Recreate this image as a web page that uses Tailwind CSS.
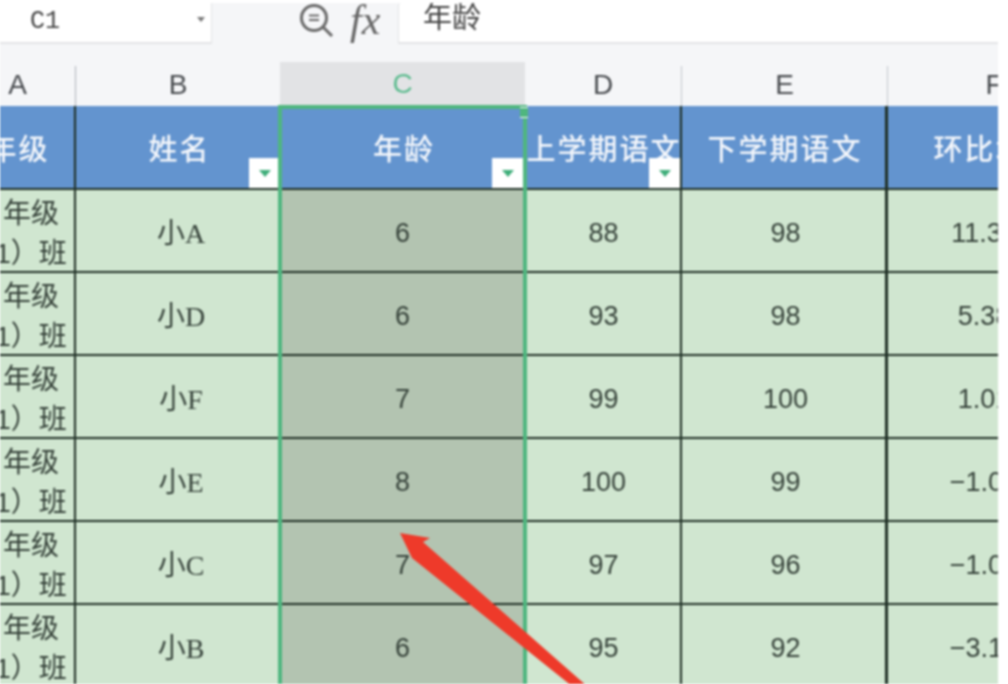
<!DOCTYPE html>
<html lang="zh">
<head>
<meta charset="utf-8">
<script src="https://cdn.jsdelivr.net/npm/@tailwindcss/browser@4"></script>
<title>表格</title>
</head>
<body class="bg-white">
<div class="w-[1008px] h-[684px] bg-white overflow-hidden pt-[3px] font-['Liberation_Sans','Noto_Sans_CJK_SC',sans-serif]">
  <div class="relative w-[998px] h-[681px] overflow-hidden bg-[#f5f6f8] blur-[0.8px]">
    <!-- formula bar -->
    <div class="flex h-[41px]">
      <div class="w-[212px] flex items-center justify-between bg-white border-r border-b-2 border-[#e3e4e6] pl-[30px] pr-[6px]">
        <span class="font-['Liberation_Mono',monospace] text-[25px] text-[#444] pb-[1px]">C1</span>
        <span class="w-0 h-0 border-x-[4px] border-x-transparent border-t-[5px] border-t-[#777] mb-[6px]"></span>
      </div>
      <div class="w-[186px] flex items-start pl-[86px]">
        <svg class="shrink-0" width="36" height="34" viewBox="0 0 36 34" fill="none" stroke="#6a6a6a" stroke-width="3"><circle cx="16" cy="15" r="12.5"/><path d="M25 24l9 9"/><path d="M11 12.500h10M11 17h10" stroke-width="2"/></svg>
      </div>
      <div class="flex-1 bg-white border-l border-b-2 border-[#e3e4e6] rounded-tl-[3px] pl-[24px] text-[29px] leading-[30px] text-[#444]">年龄</div>
    </div>
    <span class="absolute left-[350px] top-[-7px] font-['Liberation_Serif',serif] italic text-[42px] leading-[48px] text-[#666]">fx</span>

    <!-- column letters -->
    <div class="grid grid-cols-[116px_204px_245px_157px_206px_212px] w-[1140px] ml-[-40px] h-[62px] items-end text-[28px] leading-[44px] text-[#46494d] text-center">
      <div class="h-[40px] leading-[38px] border-r border-[#aeb2b8]">A</div>
      <div class="h-[40px] leading-[38px]">B</div>
      <div class="h-[44px] bg-[#e2e3e5] text-[#5cbb8e]">C</div>
      <div class="h-[40px] leading-[38px] border-r border-[#c3c6cb]">D</div>
      <div class="h-[40px] leading-[38px] border-r border-[#c3c6cb]">E</div>
      <div class="h-[40px] leading-[38px]">F</div>
    </div>

    <!-- table -->
    <div class="grid grid-cols-[116px_204px_245px_157px_206px_212px] grid-rows-[84px_83px_83px_83px_83px_83px_83px] w-[1140px] ml-[-40px] text-[27px] text-[#36423a] text-center [&>div]:border-b-2 [&>div]:border-[#1f2f25] [&>div]:flex [&>div]:items-center [&>div]:justify-center">
      <!-- header row -->
      <div class="bg-[#6394cf] border-r-2 text-[29px] tracking-[2px] text-[#f3f6fb] font-medium pt-[8px] pl-[3px]">年级</div>
      <div class="relative bg-[#6394cf] text-[29px] tracking-[2px] text-[#f3f6fb] font-medium pt-[8px] pl-[3px]">姓名
        <span class="absolute right-0 bottom-0 w-[31px] h-[30px] bg-white flex items-center justify-center"><span class="w-0 h-0 border-x-[6px] border-x-transparent border-t-[7px] border-t-[#3fae7a]"></span></span>
      </div>
      <div class="relative bg-[#6394cf] text-[29px] tracking-[2px] text-[#f3f6fb] font-medium pt-[8px] pl-[3px]">年龄
        <span class="absolute right-[2px] bottom-0 w-[31px] h-[30px] bg-white flex items-center justify-center"><span class="w-0 h-0 border-x-[6px] border-x-transparent border-t-[7px] border-t-[#3fae7a]"></span></span>
      </div>
      <div class="relative bg-[#6394cf] border-r-2 text-[29px] tracking-[2px] text-[#f3f6fb] font-medium pt-[8px] pl-[3px] whitespace-nowrap">上学期语文
        <span class="absolute right-0 bottom-0 w-[31px] h-[30px] bg-white flex items-center justify-center"><span class="w-0 h-0 border-x-[6px] border-x-transparent border-t-[7px] border-t-[#3fae7a]"></span></span>
      </div>
      <div class="bg-[#6394cf] border-r-[3px] text-[29px] tracking-[2px] text-[#f3f6fb] font-medium pt-[8px] pl-[3px] whitespace-nowrap">下学期语文</div>
      <div class="bg-[#6394cf] text-[29px] tracking-[2px] text-[#f3f6fb] font-medium pt-[8px] pl-[3px] whitespace-nowrap">环比增长</div>

      <!-- row 1 -->
      <div class="bg-[#d0e6d0] border-r-2 text-[28px] leading-[40px] pt-[6px]"><span><span class="invisible">一</span>年级<br>（1）班</span></div>
      <div class="bg-[#d0e6d0] pt-[6px] pl-[6px] font-['Liberation_Serif','Noto_Sans_CJK_SC',serif] text-[28px]">小A</div>
      <div class="bg-[#b3c4b1] pt-[6px]">6</div>
      <div class="bg-[#d0e6d0] border-r-2 pt-[6px] pl-[2px]">88</div>
      <div class="bg-[#d0e6d0] border-r-[3px] pt-[6px] pl-[4px]">98</div>
      <div class="bg-[#d0e6d0] pt-[6px] pl-[4px]">11.36%</div>
      <!-- row 2 -->
      <div class="bg-[#d0e6d0] border-r-2 text-[28px] leading-[40px] pt-[6px]"><span><span class="invisible">一</span>年级<br>（1）班</span></div>
      <div class="bg-[#d0e6d0] pt-[6px] pl-[6px] font-['Liberation_Serif','Noto_Sans_CJK_SC',serif] text-[28px]">小D</div>
      <div class="bg-[#b3c4b1] pt-[6px]">6</div>
      <div class="bg-[#d0e6d0] border-r-2 pt-[6px] pl-[2px]">93</div>
      <div class="bg-[#d0e6d0] border-r-[3px] pt-[6px] pl-[4px]">98</div>
      <div class="bg-[#d0e6d0] pt-[6px] pl-[4px]">5.38%</div>
      <!-- row 3 -->
      <div class="bg-[#d0e6d0] border-r-2 text-[28px] leading-[40px] pt-[6px]"><span><span class="invisible">一</span>年级<br>（1）班</span></div>
      <div class="bg-[#d0e6d0] pt-[6px] pl-[6px] font-['Liberation_Serif','Noto_Sans_CJK_SC',serif] text-[28px]">小F</div>
      <div class="bg-[#b3c4b1] pt-[6px]">7</div>
      <div class="bg-[#d0e6d0] border-r-2 pt-[6px] pl-[2px]">99</div>
      <div class="bg-[#d0e6d0] border-r-[3px] pt-[6px] pl-[4px]">100</div>
      <div class="bg-[#d0e6d0] pt-[6px] pl-[4px]">1.01%</div>
      <!-- row 4 -->
      <div class="bg-[#d0e6d0] border-r-2 text-[28px] leading-[40px] pt-[6px]"><span><span class="invisible">一</span>年级<br>（1）班</span></div>
      <div class="bg-[#d0e6d0] pt-[6px] pl-[6px] font-['Liberation_Serif','Noto_Sans_CJK_SC',serif] text-[28px]">小E</div>
      <div class="bg-[#b3c4b1] pt-[6px]">8</div>
      <div class="bg-[#d0e6d0] border-r-2 pt-[6px] pl-[2px]">100</div>
      <div class="bg-[#d0e6d0] border-r-[3px] pt-[6px] pl-[4px]">99</div>
      <div class="bg-[#d0e6d0] pt-[6px] pl-[4px]">−1.00%</div>
      <!-- row 5 -->
      <div class="bg-[#d0e6d0] border-r-2 text-[28px] leading-[40px] pt-[6px]"><span><span class="invisible">一</span>年级<br>（1）班</span></div>
      <div class="bg-[#d0e6d0] pt-[6px] pl-[6px] font-['Liberation_Serif','Noto_Sans_CJK_SC',serif] text-[28px]">小C</div>
      <div class="bg-[#b3c4b1] pt-[6px]">7</div>
      <div class="bg-[#d0e6d0] border-r-2 pt-[6px] pl-[2px]">97</div>
      <div class="bg-[#d0e6d0] border-r-[3px] pt-[6px] pl-[4px]">96</div>
      <div class="bg-[#d0e6d0] pt-[6px] pl-[4px]">−1.03%</div>
      <!-- row 6 -->
      <div class="bg-[#d0e6d0] border-r-2 text-[28px] leading-[40px] pt-[6px]"><span><span class="invisible">一</span>年级<br>（1）班</span></div>
      <div class="bg-[#d0e6d0] pt-[6px] pl-[6px] font-['Liberation_Serif','Noto_Sans_CJK_SC',serif] text-[28px]">小B</div>
      <div class="bg-[#b3c4b1] pt-[6px]">6</div>
      <div class="bg-[#d0e6d0] border-r-2 pt-[6px] pl-[2px]">95</div>
      <div class="bg-[#d0e6d0] border-r-[3px] pt-[6px] pl-[4px]">92</div>
      <div class="bg-[#d0e6d0] pt-[6px] pl-[4px]">−3.16%</div>
    </div>

    <!-- selection frame -->
    <div class="absolute left-[278px] top-[102px] w-[249px] h-[600px] border-4 border-[#4fb67f]"></div>
    <div class="absolute left-[520px] top-[104px] w-[8px] h-[11px] bg-[#4fb67f] border-y border-white"></div>

    <!-- arrow -->
    <svg class="absolute left-0 top-0" width="998" height="681" viewBox="0 3 998 681" fill="#ee3a2a"><path d="M400 533L430 538L423 542L588 687L573 687L412 558Z"/></svg>
  </div>
</div>
</body>
</html>
